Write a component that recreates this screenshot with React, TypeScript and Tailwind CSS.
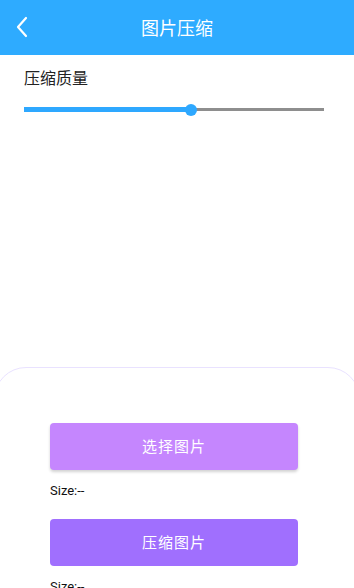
import { useState } from "react";

function BackIcon() {
  return (
    <svg width="14" height="22" viewBox="0 0 14 22" fill="none">
      <path
        d="M11 2 L3 11 L11 20"
        stroke="white"
        strokeWidth="2.2"
        strokeLinecap="round"
        strokeLinejoin="round"
      />
    </svg>
  );
}

function QualitySlider({ value }: { value: number }) {
  return (
    <div className="relative ml-6 mr-[30px] h-3">
      <div className="absolute left-0 right-0 top-[4px] h-[3px] bg-[#8e8e8e]" />
      <div
        className="absolute left-0 top-[3px] h-[5px] bg-[#2ea8ff]"
        style={{ width: `${value}%` }}
      />
      <div
        className="absolute top-0 h-3 w-3 -translate-x-1/2 rounded-full bg-[#2ea8ff]"
        style={{ left: `${value}%` }}
      />
    </div>
  );
}

export default function App() {
  const [quality] = useState(55.7);
  return (
    <div className="flex h-[588px] w-[354px] flex-col overflow-hidden bg-white font-['Noto_Sans_CJK_SC',sans-serif]">
      <header className="relative flex h-[55px] shrink-0 items-center justify-center bg-[#2eabff]">
        <button className="absolute left-[15px] top-[16px]">
          <BackIcon />
        </button>
        <h1 className="text-[18px] text-white">图片压缩</h1>
      </header>

      <div className="px-6 pt-[10px] text-[16px] leading-6 text-[#222]">
        压缩质量
      </div>
      <div className="mt-[15px]">
        <QualitySlider value={quality} />
      </div>

      <div className="mt-[251px] -mx-[6px] flex flex-1 flex-col rounded-t-[32px] border border-[#e9e2ff] px-[55px] pt-[55px]">
        <button className="h-[47px] w-[248px] rounded-[4px] bg-[#c586fe] text-[15px] tracking-[1px] text-white shadow-[0_2px_3px_rgba(0,0,0,0.18)]">
          选择图片
        </button>
        <p className="mt-[11px] font-['Roboto',sans-serif] text-[13px] leading-5 text-[#111]">
          Size:--
        </p>
        <button className="mt-[18px] h-[47px] w-[248px] rounded-[4px] bg-[#a06ffe] text-[15px] tracking-[1px] text-white">
          压缩图片
        </button>
        <p className="mt-[11px] font-['Roboto',sans-serif] text-[13px] leading-5 text-[#111]">
          Size:--
        </p>
      </div>
    </div>
  );
}
